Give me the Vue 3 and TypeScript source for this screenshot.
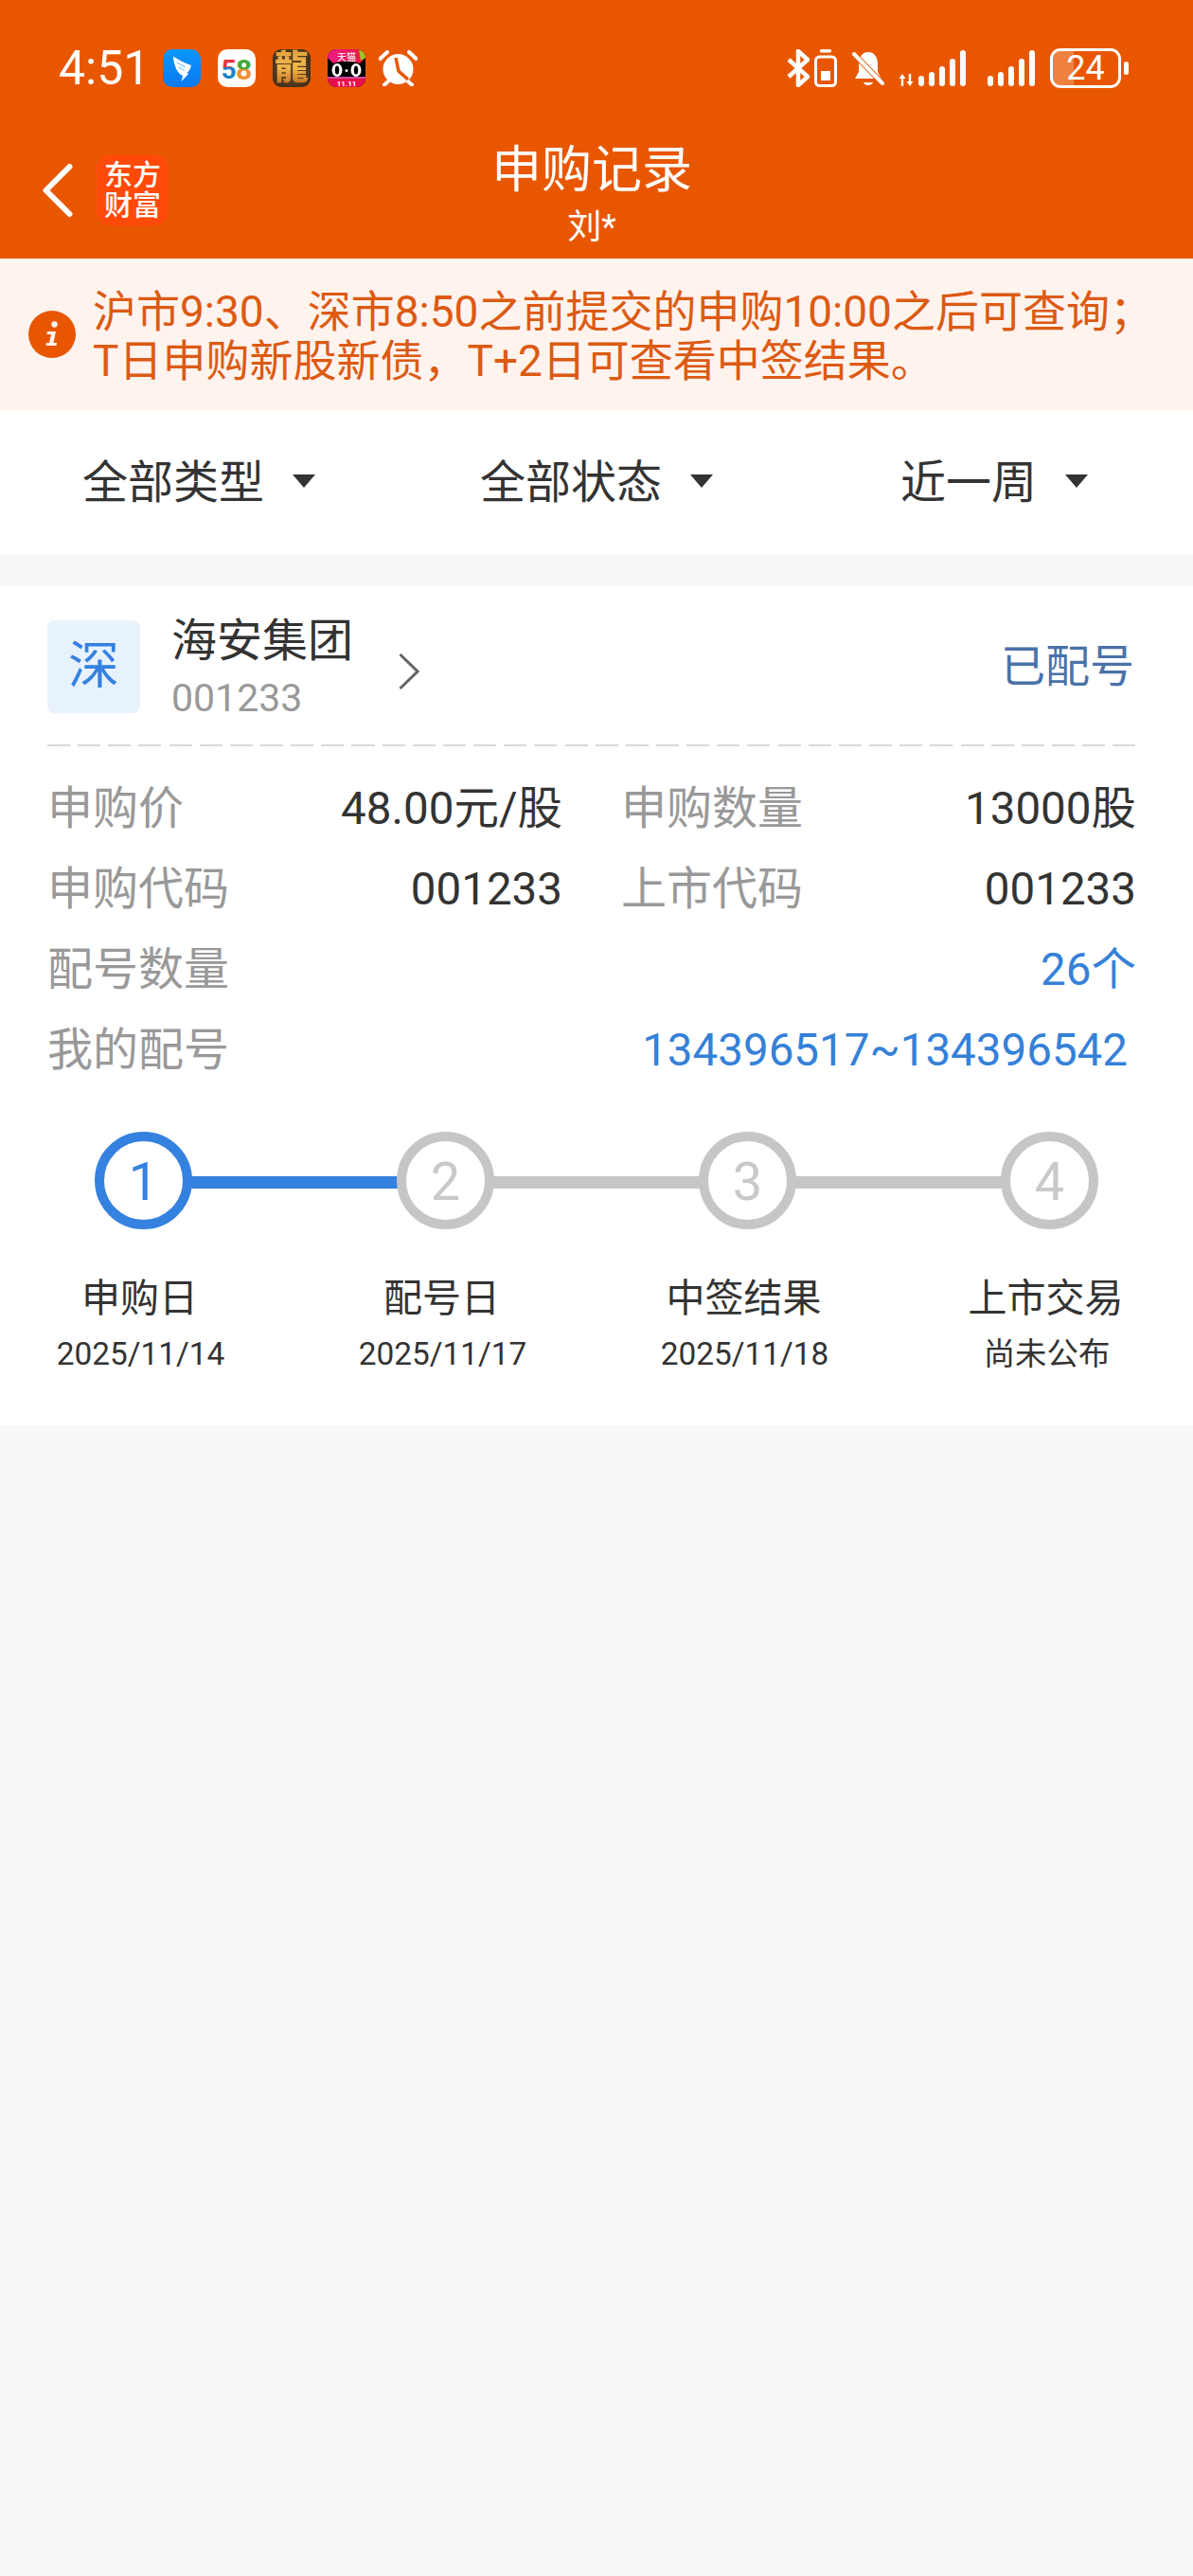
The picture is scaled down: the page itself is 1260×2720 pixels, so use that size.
<script setup lang="ts">
interface InfoRow {
  label: string;
  value: string;
  full?: boolean;
  link?: boolean;
  inset?: boolean;
}

interface Step {
  num: number;
  title: string;
  date: string;
  done: boolean;
  lineDone: boolean;
}

const filters: string[] = ['全部类型', '全部状态', '近一周'];

const rows: InfoRow[] = [
  { label: '申购价', value: '48.00元/股' },
  { label: '申购数量', value: '13000股' },
  { label: '申购代码', value: '001233' },
  { label: '上市代码', value: '001233' },
  { label: '配号数量', value: '26个', full: true, link: true },
  { label: '我的配号', value: '134396517~134396542', full: true, link: true, inset: true }
];

const steps: Step[] = [
  { num: 1, title: '申购日', date: '2025/11/14', done: true, lineDone: true },
  { num: 2, title: '配号日', date: '2025/11/17', done: false, lineDone: false },
  { num: 3, title: '中签结果', date: '2025/11/18', done: false, lineDone: false },
  { num: 4, title: '上市交易', date: '尚未公布', done: false, lineDone: false }
];

const signalTops: number[] = [27, 23, 17, 9, 0];
</script>

<template>
  <div class="page">
    <header class="top">
      <div class="status">
        <div class="status-left">
          <span class="time">4:51</span>
          <!-- notification icons -->
          <svg class="app" viewBox="0 0 40 40">
            <defs>
              <linearGradient id="dingBg" x1="0" y1="0" x2="0" y2="1">
                <stop offset="0" stop-color="#0a97ff" />
                <stop offset="1" stop-color="#0b79ee" />
              </linearGradient>
            </defs>
            <rect width="40" height="40" rx="10" fill="url(#dingBg)" />
            <path d="M11 7.5C16 11 23 14.5 30 17C29.5 20 27.5 23.5 25 25.5L27.5 25.5L19.5 34L21 28C16 26 11.5 18 11 7.5Z" fill="#fff" />
            <path d="M15 14L24 19M16.5 19L23 22.5" stroke="#5db8ff" stroke-width="1" fill="none" />
          </svg>
          <svg class="app" viewBox="0 0 40 40">
            <defs>
              <linearGradient id="five" x1="0" y1="0" x2="0" y2="1">
                <stop offset="0.42" stop-color="#e8323c" />
                <stop offset="0.42" stop-color="#1d82c4" />
              </linearGradient>
              <linearGradient id="eight" x1="0" y1="0" x2="0" y2="1">
                <stop offset="0.5" stop-color="#45a834" />
                <stop offset="0.5" stop-color="#ee9132" />
              </linearGradient>
            </defs>
            <rect width="40" height="40" rx="10" fill="#fff" />
            <text x="3.5" y="31" class="logo-num" fill="url(#five)">5</text>
            <text x="19" y="32" class="logo-num tall" fill="url(#eight)">8</text>
          </svg>
          <div class="app game"><span>龍</span></div>
          <svg class="app" viewBox="0 0 40 40">
            <defs>
              <linearGradient id="tmallTop" x1="0" y1="0" x2="1" y2="0">
                <stop offset="0" stop-color="#ee1a82" />
                <stop offset="1" stop-color="#e81c3c" />
              </linearGradient>
              <clipPath id="tmallClip"><rect width="40" height="40" rx="9" /></clipPath>
            </defs>
            <g clip-path="url(#tmallClip)">
              <rect width="40" height="40" fill="#000" />
              <path d="M0 0H40V9L34 15C26 12 14 12 6 15L0 9Z" fill="url(#tmallTop)" />
              <path d="M33 0L40 4V9L35 12Z" fill="#9ac52c" />
              <rect y="31" width="40" height="9" fill="#e8104a" />
              <rect y="29" width="40" height="2" fill="#c94fa0" />
              <ellipse cx="10" cy="22" rx="5.5" ry="7" fill="#fff" />
              <ellipse cx="30" cy="22" rx="5.5" ry="7" fill="#fff" />
              <ellipse cx="10" cy="22" rx="2.2" ry="4.5" fill="#000" />
              <ellipse cx="30" cy="22" rx="2.2" ry="4.5" fill="#000" />
              <circle cx="20" cy="22.5" r="1.5" fill="#fff" />
              <text x="20" y="12" text-anchor="middle" class="tmall-name">天猫</text>
              <text x="20" y="38.5" text-anchor="middle" class="tmall-date">11.11</text>
            </g>
          </svg>
          <svg class="alarm" viewBox="0 0 41 38">
            <circle cx="20.5" cy="20" r="16" fill="#fff" />
            <path d="M1.5 9L9 2M39.5 9L32 2M6 36.5L10 33M35 36.5L31 33" stroke="#fff" stroke-width="4" stroke-linecap="round" fill="none" />
            <path d="M18 8L21 22L31 31" stroke="#e85700" stroke-width="3.5" fill="none" />
          </svg>
        </div>
        <div class="status-right">
          <svg class="bt" viewBox="0 0 24 40">
            <path d="M2 11L22 29L12 38V2L22 11L2 29" stroke="#fff" stroke-width="4.5" fill="none" stroke-linejoin="round" />
          </svg>
          <svg class="mini-batt" viewBox="0 0 24 40">
            <rect x="6" y="0" width="12" height="3.5" rx="1.5" fill="#fff" />
            <rect x="1.5" y="8" width="21" height="30.5" rx="4" stroke="#fff" stroke-width="3" fill="none" />
            <rect x="7" y="23" width="10" height="10" fill="#fff" />
          </svg>
          <svg class="bell" viewBox="0 0 34 40">
            <path d="M17 3C24 3 27 9 27 16V24L31 31H3L7 24V16C7 9 10 3 17 3Z" fill="#fff" />
            <path d="M12 35H22C21 39 13 39 12 35Z" fill="#fff" />
            <path d="M2 5L32 36" stroke="#e85700" stroke-width="6" />
            <path d="M2 5L32 36" stroke="#fff" stroke-width="4" stroke-linecap="round" />
          </svg>
          <div class="signal first">
            <svg class="arrows" viewBox="0 0 16 13">
              <path d="M4 0L7.5 5H5.2V13H2.8V5H0.5Z M12 13L15.5 8H13.2V0H10.8V8H8.5Z" fill="#fff" />
            </svg>
            <i v-for="(top, i) in signalTops" :key="i" :style="{ height: 38 - top + 'px' }"></i>
          </div>
          <div class="signal">
            <i v-for="(top, i) in signalTops" :key="i" :style="{ height: 38 - top + 'px' }"></i>
          </div>
          <div class="battery">
            <span class="battery-fill"></span>
            <span class="battery-num">24</span>
          </div>
          <span class="battery-nub"></span>
        </div>
      </div>

      <div class="nav">
        <div class="nav-left">
          <svg class="back" viewBox="0 0 32 56">
            <path d="M28.5 3L3.5 28L28.5 53" stroke="#fff" stroke-width="6" stroke-linecap="round" stroke-linejoin="round" fill="none" />
          </svg>
          <div class="brand"><span>东方</span><span>财富</span></div>
        </div>
        <div class="nav-title">
          <div class="title">申购记录</div>
          <div class="subtitle">刘*</div>
        </div>
      </div>
    </header>

    <section class="notice">
      <svg class="notice-icon" viewBox="0 0 50 50">
        <circle cx="25" cy="25" r="25" fill="#e85700" />
        <circle cx="27.5" cy="14.5" r="3.2" fill="#fff3ee" />
        <path d="M20 22H29L26.5 34H30L29.5 37H18.5L19 34H22L24 25H19.5Z" fill="#fff3ee" />
      </svg>
      <div class="notice-text">
        <div>沪市9:30、深市8:50之前提交的申购10:00之后可查询；</div>
        <div>T日申购新股新债，T+2日可查看中签结果。</div>
      </div>
    </section>

    <nav class="filters">
      <div v-for="item in filters" :key="item" class="filter">
        <span>{{ item }}</span>
        <i class="caret"></i>
      </div>
    </nav>

    <article class="card">
      <div class="card-head">
        <div class="market">深</div>
        <div class="stock">
          <div class="stock-name">海安集团</div>
          <div class="stock-code">001233</div>
        </div>
        <svg class="more" viewBox="0 0 22 38">
          <path d="M1.5 1L20 19L1.5 37" stroke="#666" stroke-width="3" fill="none" />
        </svg>
        <div class="state">已配号</div>
      </div>
      <div class="dash"></div>

      <div class="rows">
        <div v-for="row in rows" :key="row.label" class="row" :class="{ full: row.full }">
          <span class="row-label">{{ row.label }}</span>
          <span class="row-value" :class="{ link: row.link, inset: row.inset }">{{ row.value }}</span>
        </div>
      </div>

      <div class="steps">
        <div v-for="(step, i) in steps" :key="step.num" class="step">
          <span
            v-if="i < steps.length - 1"
            class="step-line"
            :class="{ on: step.lineDone }"
          ></span>
          <div class="step-dot" :class="{ on: step.done }">{{ step.num }}</div>
          <div class="step-title">{{ step.title }}</div>
          <div class="step-date">{{ step.date }}</div>
        </div>
      </div>
    </article>
  </div>
</template>

<style scoped>
.page {
  width: 1260px;
  min-height: 2720px;
  background: #f6f7f9;
  font-family: Roboto, "Noto Sans CJK SC", sans-serif;
  color: #333;
}

.top {
  height: 273px;
  background: #e85700;
  color: #fff;
}

.status {
  height: 110px;
  padding: 51px 68px 0 62px;
  box-sizing: border-box;
  display: flex;
  justify-content: space-between;
  align-items: flex-start;
}

.status-left,
.status-right {
  display: flex;
  align-items: center;
  height: 42px;
}

.time {
  width: 110px;
  font-size: 50px;
  line-height: 42px;
  font-weight: 450;
}

.app {
  width: 40px;
  height: 40px;
  margin-right: 18px;
  flex: none;
}

.logo-num {
  font-family: Roboto, sans-serif;
  font-size: 28px;
  font-weight: 700;
}

.logo-num.tall {
  font-size: 30px;
}

.tmall-name {
  font-family: "Noto Sans CJK SC", sans-serif;
  font-size: 10px;
  fill: #fff;
}

.tmall-date {
  font-family: Roboto, sans-serif;
  font-size: 8px;
  font-weight: 700;
  fill: #fff;
}

.game {
  border-radius: 9px;
  background: radial-gradient(circle, #6b4a24 0%, #3a2a1a 100%);
  display: flex;
  align-items: center;
  justify-content: center;
}

.game span {
  font-size: 36px;
  line-height: 40px;
  font-weight: 900;
  background: linear-gradient(180deg, #e0a040, #f0b84a 50%, #b8601c);
  -webkit-background-clip: text;
  background-clip: text;
  color: transparent;
}

.alarm {
  width: 41px;
  height: 38px;
  margin-left: -4px;
}

.bt {
  width: 24px;
  height: 40px;
  margin-right: 5px;
}

.mini-batt {
  width: 24px;
  height: 40px;
  margin-right: 16px;
}

.bell {
  width: 34px;
  height: 40px;
  margin-right: 15px;
}

.signal {
  display: flex;
  align-items: flex-end;
  gap: 5px;
  height: 38px;
  margin-right: 16px;
}

.signal.first {
  margin-right: 23px;
}

.signal i {
  width: 6px;
  border-radius: 3px;
  background: #fff;
  display: block;
}

.arrows {
  width: 16px;
  height: 13px;
}

.battery {
  position: relative;
  width: 75px;
  height: 42px;
  box-sizing: border-box;
  border: 3px solid #fff;
  border-radius: 11px;
  overflow: hidden;
  display: flex;
  align-items: center;
  justify-content: center;
}

.battery-fill {
  position: absolute;
  left: 0;
  top: 0;
  bottom: 0;
  width: 22px;
  background: rgba(255, 255, 255, 0.25);
}

.battery-num {
  position: relative;
  font-size: 36px;
  font-weight: 450;
  line-height: 36px;
}

.battery-nub {
  width: 5px;
  height: 14px;
  margin-left: 3px;
  border-radius: 3px;
  background: #fff;
}

.nav {
  position: relative;
  height: 163px;
}

.nav-left {
  display: flex;
  align-items: center;
  padding: 53px 0 0 45px;
}

.back {
  width: 32px;
  height: 56px;
}

.brand {
  width: 76px;
  height: 75px;
  margin-left: 25px;
  border-radius: 15px;
  background: #ff4a0a;
  display: flex;
  flex-direction: column;
  align-items: center;
  justify-content: center;
  font-size: 30px;
  line-height: 32px;
  font-weight: 500;
}

.nav-title {
  position: absolute;
  left: 0;
  right: 10px;
  top: 39px;
  text-align: center;
}

.title {
  font-size: 53px;
  line-height: 62px;
}

.subtitle {
  margin-top: 9px;
  font-size: 36px;
  line-height: 40px;
}

.notice {
  height: 160px;
  box-sizing: border-box;
  padding-left: 30px;
  background: #fff3ee;
  display: flex;
  align-items: center;
  gap: 18px;
}

.notice-icon {
  width: 50px;
  height: 50px;
  flex: none;
}

.notice-text {
  padding-top: 4px;
  font-size: 46px;
  line-height: 52px;
  color: #dc5a12;
  white-space: nowrap;
}

.filters {
  height: 153px;
  background: #fff;
  display: grid;
  grid-template-columns: repeat(3, 1fr);
  align-items: center;
}

.filter {
  display: flex;
  justify-content: center;
  align-items: center;
  gap: 30px;
  font-size: 48px;
  line-height: 60px;
}

.caret {
  width: 0;
  height: 0;
  border-left: 12px solid transparent;
  border-right: 12px solid transparent;
  border-top: 14px solid #333;
  margin-top: -4px;
}

.card {
  margin-top: 33px;
  padding: 36px 60px 50px 50px;
  background: #fff;
  overflow: hidden;
}

.card-head {
  height: 98px;
  display: flex;
  align-items: center;
}

.market {
  width: 98px;
  height: 98px;
  border-radius: 8px;
  background: #e8f2fd;
  color: #3581e0;
  font-size: 54px;
  line-height: 98px;
  text-align: center;
  flex: none;
}

.stock {
  align-self: flex-start;
  margin-left: 33px;
  width: 240px;
}

.stock-name {
  margin-top: -1px;
  font-size: 48px;
  line-height: 46px;
}

.stock-code {
  margin-top: 15px;
  font-size: 41px;
  line-height: 44px;
  color: #999;
}

.more {
  width: 22px;
  height: 38px;
  margin-top: 10px;
}

.state {
  margin-left: auto;
  font-size: 47px;
  line-height: 60px;
  color: #4a72a8;
  padding-right: 2px;
}

.dash {
  margin-top: 33px;
  height: 2px;
  background: repeating-linear-gradient(90deg, #d8d8d8 0, #d8d8d8 24px, transparent 24px, transparent 32.15px);
}

.rows {
  margin-top: 23px;
  display: grid;
  grid-template-columns: 1fr 1fr;
  column-gap: 62px;
}

.row {
  height: 85px;
  display: flex;
  justify-content: space-between;
  align-items: center;
  font-size: 47.5px;
  line-height: 60px;
}

.row.full {
  grid-column: 1 / 3;
}

.row-label {
  color: #999;
  font-size: 48px;
}

.row-value.link {
  color: #3581d8;
}

.row-value.inset {
  padding-right: 9px;
}

.steps {
  margin: 44px 0 0 -58px;
  width: 1276px;
  display: flex;
}

.step {
  position: relative;
  flex: 0 0 319px;
  display: flex;
  flex-direction: column;
  align-items: center;
}

.step-line {
  position: absolute;
  left: 210px;
  top: 47px;
  width: 218px;
  height: 13px;
  background: #c6c6c6;
}

.step-line.on {
  background: #3581e0;
}

.step-dot {
  position: relative;
  width: 103px;
  height: 103px;
  box-sizing: border-box;
  border: 10px solid #c6c6c6;
  border-radius: 50%;
  background: #fff;
  color: #c9c9c9;
  font-size: 56px;
  font-weight: 400;
  line-height: 87px;
  text-align: center;
}

.step-dot.on {
  border-color: #3581e0;
  color: #3581e0;
}

.step-title {
  margin: 48px 8px 0 0;
  font-size: 41px;
  line-height: 50px;
}

.step-date {
  margin: 9px 6px 0 0;
  font-size: 33.4px;
  line-height: 50px;
}
</style>

<style>
html,
body {
  margin: 0;
  background: #f6f7f9;
}
</style>
